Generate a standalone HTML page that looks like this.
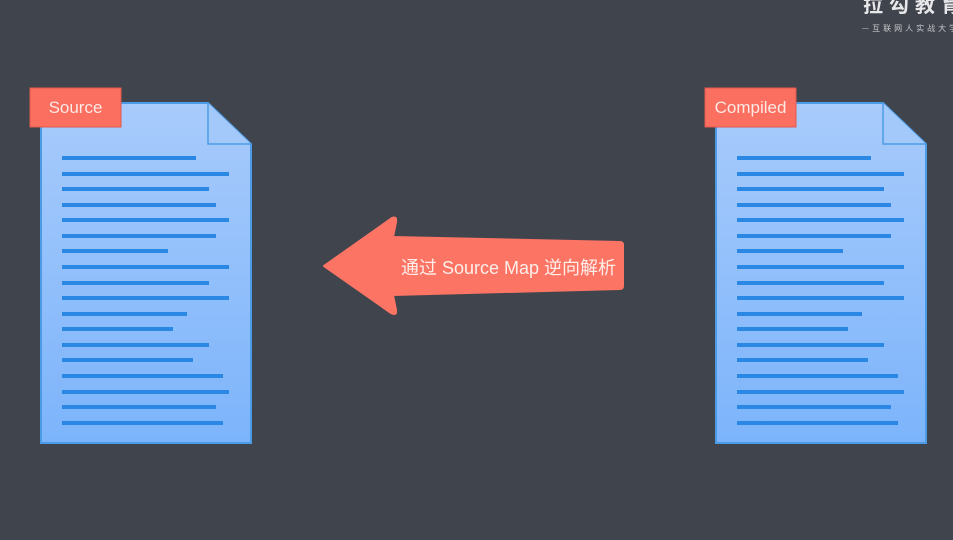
<!DOCTYPE html>
<html><head><meta charset="utf-8"><style>
html,body{margin:0;padding:0;background:#40444d;overflow:hidden}
</style></head><body>
<svg width="953" height="535" viewBox="0 0 953 535" xmlns="http://www.w3.org/2000/svg">
<defs>
<linearGradient id="g" x1="0" y1="0" x2="0" y2="1">
<stop offset="0" stop-color="#a8cbfb"/><stop offset="1" stop-color="#7cb4fb"/>
</linearGradient>
</defs>
<rect width="953" height="535" fill="#40444d"/>
<g id="doc">
<path d="M41 103 H208 L251 144 V443 H41 Z" fill="url(#g)" stroke="#4c9be6" stroke-width="2"/>
<path d="M208 103 V144 H251" fill="#a3c8fa" stroke="#4c9be6" stroke-width="1.5"/>
<g stroke="#2a88e4" stroke-width="4">
<line x1="62" y1="158" x2="196" y2="158"/><line x1="62" y1="174" x2="229" y2="174"/>
<line x1="62" y1="189" x2="209" y2="189"/><line x1="62" y1="205" x2="216" y2="205"/>
<line x1="62" y1="220" x2="229" y2="220"/><line x1="62" y1="236" x2="216" y2="236"/>
<line x1="62" y1="251" x2="168" y2="251"/><line x1="62" y1="267" x2="229" y2="267"/>
<line x1="62" y1="283" x2="209" y2="283"/><line x1="62" y1="298" x2="229" y2="298"/>
<line x1="62" y1="314" x2="187" y2="314"/><line x1="62" y1="329" x2="173" y2="329"/>
<line x1="62" y1="345" x2="209" y2="345"/><line x1="62" y1="360" x2="193" y2="360"/>
<line x1="62" y1="376" x2="223" y2="376"/><line x1="62" y1="392" x2="229" y2="392"/>
<line x1="62" y1="407" x2="216" y2="407"/><line x1="62" y1="423" x2="223" y2="423"/>
</g>
</g>
<use href="#doc" transform="translate(675,0)"/>
<rect x="30" y="88" width="91" height="39" fill="#fb6f60" stroke="#e05a4c" stroke-width="1"/>
<text x="75.5" y="113" text-anchor="middle" fill="#fde8e4" font-family="Liberation Sans, sans-serif" font-size="17">Source</text>
<rect x="705" y="88" width="91" height="39" fill="#fb6f60" stroke="#e05a4c" stroke-width="1"/>
<text x="750.5" y="113" text-anchor="middle" fill="#fde8e4" font-family="Liberation Sans, sans-serif" font-size="17">Compiled</text>
<path d="M324 266 L392 218 Q397 216 396 222 L393 237 L620 242 Q623 242 623 245 V286 Q623 289 620 289 L393 295 L396 310 Q397 316 391 313 Z" fill="#fb7464" stroke="#fb7464" stroke-width="2" stroke-linejoin="round"/>
<text x="401" y="274" fill="#fdeeea" font-family="Liberation Sans, 'Noto Sans CJK SC', sans-serif" font-size="18">通过 Source Map 逆向解析</text>
<text x="863" y="12" fill="#e8e8ea" font-family="'Noto Sans CJK SC', sans-serif" font-size="20" font-weight="bold" letter-spacing="6">拉勾教育</text>
<text x="862" y="31" fill="#c8c8cc" font-family="'Noto Sans CJK SC', sans-serif" font-size="8" letter-spacing="3">—互联网人实战大学</text>
</svg>
</body></html>
